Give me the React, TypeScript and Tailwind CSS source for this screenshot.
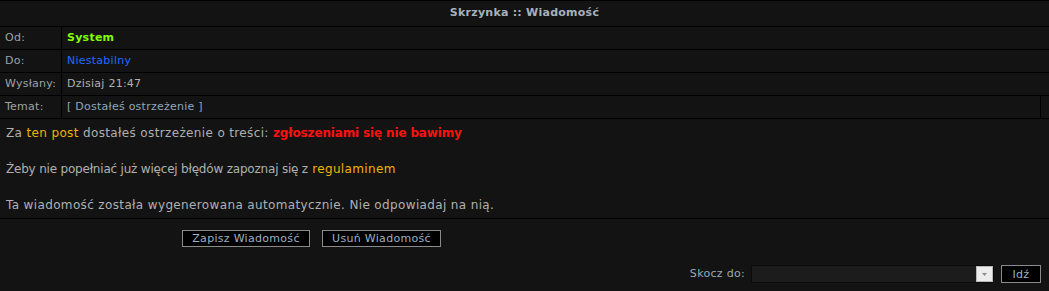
import React from "react";

const rows = [
  { label: "Od:", value: <span className="font-bold text-[#80ff00]">System</span> },
  { label: "Do:", value: <span className="text-[#1e6cff]">Niestabilny</span> },
  { label: "Wysłany:", value: <span className="text-[#b0b0b0]">Dzisiaj 21:47</span> },
];

export default function App() {
  return (
    <div
      className="w-[1049px] h-[291px] bg-[#131313] text-[11px] tracking-[0.25px] text-[#b2b2b2] overflow-hidden"
      style={{ fontFamily: '"DejaVu Sans", Verdana, sans-serif' }}
    >
      <div className="border-t border-black">
        {/* naglowek */}
        <div className="h-[26px] flex items-center justify-center font-bold text-[#a7b1bc] border-b border-black">
          Skrzynka :: Wiadomość
        </div>

        {rows.map((r) => (
          <div key={r.label} className="grid grid-cols-[62px_1fr] h-[23px] border-b border-black">
            <div className="border-r border-black px-[5px] flex items-center text-[#9ea3a3]">{r.label}</div>
            <div className="px-[5px] flex items-center">{r.value}</div>
          </div>
        ))}

        <div className="grid grid-cols-[62px_1fr_8px] h-[23px] border-b border-black">
          <div className="border-r border-black px-[5px] flex items-center text-[#9ea3a3]">Temat:</div>
          <div className="border-r border-black px-[5px] flex items-center text-[#8ea6bd]">
            [ Dostałeś ostrzeżenie ]
          </div>
          <div />
        </div>

        {/* tresc */}
        <div className="pt-[5px] pb-[4px] px-[6px] text-[12px] tracking-[0.36px] leading-[18px] text-[#b0b0b0] border-b border-black">
          Za <span className="text-[#f0b400]">ten post</span> dostałeś ostrzeżenie o treści:{" "}
          <span className="font-bold tracking-[-0.15px] text-[#ff1010]">zgłoszeniami się nie bawimy</span>
          <br />
          <br />
          <span className="tracking-[-0.2px]">Żeby nie popełniać już więcej błędów zapoznaj się z</span>{" "}
          <span className="text-[#f0b400]">regulaminem</span>
          <br />
          <br />
          Ta wiadomość została wygenerowana automatycznie. Nie odpowiadaj na nią.
        </div>

        <div className="flex gap-[12px] pl-[182px] pt-[11px]">
          <button className="h-[17px] w-[128px] bg-black border border-[#8a8a8a] text-[#9fb0c2] text-[11px] tracking-[0.3px] leading-none">
            Zapisz Wiadomość
          </button>
          <button className="h-[17px] w-[119px] bg-black border border-[#8a8a8a] text-[#9fb0c2] text-[11px] tracking-[0.3px] leading-none">
            Usuń Wiadomość
          </button>
        </div>

        <div className="flex items-center justify-end gap-[6px] pr-[8px] pt-[18px]">
          <span className="text-[#9aa8b6] tracking-[0.3px]">Skocz do:</span>
          <div className="w-[243px] h-[18px] flex bg-[#1c1c1c] border border-[#0a0a0a]">
            <div className="flex-1" />
            <div className="w-[17px] h-full bg-[#ececec] border border-[#b8b8b8] flex items-end justify-center pb-[5px]">
              <svg width="5" height="3" viewBox="0 0 5 3">
                <path d="M0 0h5L2.5 3z" fill="#8a8a8a" />
              </svg>
            </div>
          </div>
          <button className="h-[18px] w-[40px] ml-[1px] bg-black border border-[#8a8a8a] text-[#9fb0c2] text-[11px] tracking-[0.3px] leading-none">
            Idź
          </button>
        </div>
      </div>
    </div>
  );
}
